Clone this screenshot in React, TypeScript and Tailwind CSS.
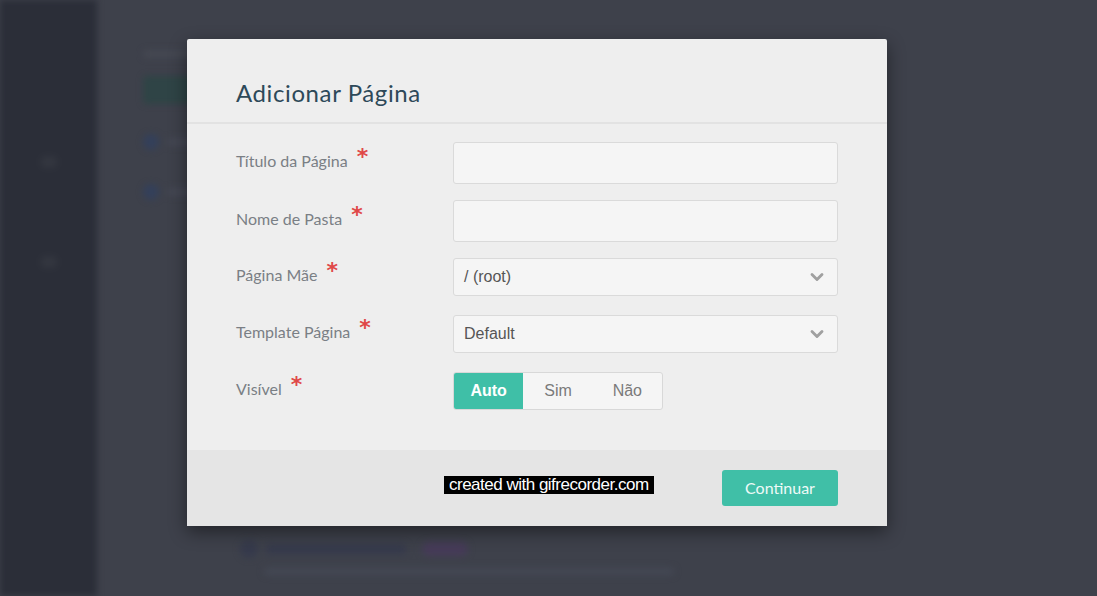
import { ChevronDown } from "lucide-react";

const fields = [
  { label: "Título da Página", kind: "input", h: "h-[42px]", mb: "mb-[16px]" },
  { label: "Nome de Pasta", kind: "input", h: "h-[42px]", mb: "mb-[16px]" },
  { label: "Página Mãe", kind: "select", value: "/ (root)", h: "h-[38px]", mb: "mb-[19px]" },
  { label: "Template Página", kind: "select", value: "Default", h: "h-[38px]", mb: "mb-[19px]" },
];

function Label({ text }: { text: string }) {
  return (
    <div className="w-[217px] shrink-0 -mt-[4px] flex items-start text-[16px] text-[#7a7f85] font-['Lato',sans-serif]">
      <span>{text}</span>
      <span className="ml-[9px] -mt-[3px] text-[22px] leading-none font-bold text-[#e04848] font-['DejaVu_Sans',sans-serif]">*</span>
    </div>
  );
}

export default function App() {
  return (
    <div className="relative w-full h-[596px] overflow-hidden bg-[#3e414b] font-['Lato',sans-serif]">
      {/* Blurred page behind the modal */}
      <div className="flex h-full">
        <aside className="w-[97px] shrink-0 bg-[#2b2e38] flex flex-col items-center pt-[156px] gap-[88px] blur-[3px]">
          <div className="w-[16px] h-[12px] rounded bg-[#33363f]" />
          <div className="w-[16px] h-[12px] rounded bg-[#33363f]" />
        </aside>
        <main className="flex-1 pl-[46px] pt-[50px] blur-[3px]">
          <div className="w-[80px] h-[8px] bg-[#454852] rounded mb-[18px]" />
          <div className="w-[60px] h-[28px] bg-[#2f4446] rounded mb-[30px]" />
          <div className="flex items-center gap-2 mb-[34px]">
            <div className="w-[16px] h-[16px] rounded-full bg-[#34405a]" />
            <div className="w-[40px] h-[8px] bg-[#444753] rounded" />
          </div>
          <div className="flex items-center gap-2">
            <div className="w-[16px] h-[16px] rounded-full bg-[#34405a]" />
            <div className="w-[40px] h-[8px] bg-[#444753] rounded" />
          </div>
          <div className="mt-[340px] ml-[97px] blur-[1px]">
            <div className="flex items-center gap-2">
              <div className="w-[18px] h-[18px] rounded-full bg-[#363a4c]" />
              <div className="w-[140px] h-[10px] bg-[#363a4c] rounded" />
              <div className="w-[46px] h-[14px] bg-[#463b58] rounded-full ml-2" />
            </div>
            <div className="ml-[24px] mt-[10px] w-[410px] h-[7px] bg-[#444854] rounded" />
          </div>
        </main>
      </div>

      {/* Modal */}
      <div className="absolute left-[187px] top-[39px] w-[700px] bg-[#eeeeee] rounded-[2px] shadow-[0_6px_18px_rgba(0,0,0,0.45)]">
        <div className="h-[85px] pl-[49px] pt-[39px] border-b-2 border-[#e2e2e2]">
          <h2 className="text-[24px] leading-[30px] tracking-[0.6px] text-[#2d4959] font-['Lato',sans-serif]">
            Adicionar Página
          </h2>
        </div>

        <div className="pl-[49px] pr-[49px] pt-[18px] pb-[40px]">
          {fields.map((f) => (
            <div key={f.label} className={`flex items-center ${f.mb}`}>
              <Label text={f.label} />
              <div
                className={`flex-1 ${f.h} bg-[#f5f5f5] border border-[#dadada] rounded-[3px] flex items-center justify-between pl-[10px] pr-[10px]`}
              >
                {f.kind === "select" && (
                  <>
                    <span className="text-[16px] text-[#555] font-['Liberation_Sans',Arial,sans-serif]">{f.value}</span>
                    <ChevronDown size={20} strokeWidth={3.4} className="text-[#a0a0a0]" />
                  </>
                )}
              </div>
            </div>
          ))}
          <div className="flex items-center">
            <Label text="Visível" />
            <div className="grid grid-cols-3 w-[210px] h-[38px] border border-[#d8d8d8] rounded-[3px] bg-[#f5f5f5] overflow-hidden font-['Liberation_Sans',Arial,sans-serif] text-[16px]">
              <div className="flex items-center justify-center bg-[#3fbfa7] text-white font-bold">Auto</div>
              <div className="flex items-center justify-center text-[#7a7a7a]">Sim</div>
              <div className="flex items-center justify-center text-[#7a7a7a]">Não</div>
            </div>
          </div>
        </div>

        <div className="relative h-[76px] bg-[#e5e5e5] flex items-center justify-end pr-[49px]">
          <div className="absolute left-[257px] top-[26px] h-[18px] px-[5px] bg-black text-white text-[17px] leading-[18px] tracking-[-0.5px] font-['Liberation_Sans',Arial,sans-serif]">
            created with gifrecorder.com
          </div>
          <button className="w-[116px] h-[36px] rounded-[3px] bg-[#40bfa7] text-[#eefaf7] text-[16px]">
            Continuar
          </button>
        </div>
      </div>
    </div>
  );
}
